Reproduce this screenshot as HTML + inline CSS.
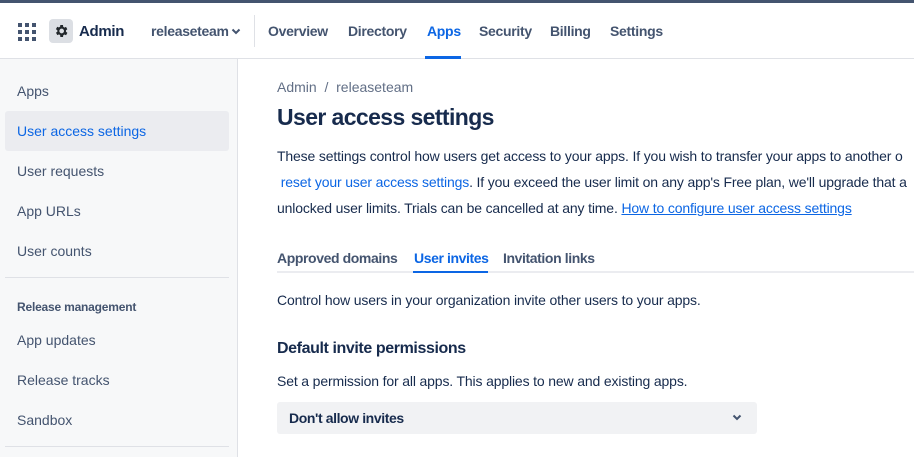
<!DOCTYPE html>
<html><head><style>
*{margin:0;padding:0;box-sizing:border-box}
body{width:914px;height:457px;overflow:hidden;font-family:"Liberation Sans",sans-serif;color:#172b4d;background:#fff;position:relative;font-size:14px}
.top{position:absolute;left:0;top:0;width:914px;height:3px;background:#44546f}
.hdr{position:absolute;top:3px;left:0;width:914px;height:56px;border-bottom:1px solid #dfe1e6}
.a{position:absolute;white-space:nowrap}
.nav{font-size:14px;font-weight:bold;color:#44546f;top:23px;letter-spacing:-0.3px}
.side{position:absolute;left:0;top:59px;width:238px;height:398px;background:#f7f8f9;border-right:1px solid #dfe1e6}
.si{position:absolute;left:17px;font-size:14px;color:#44546f}
p.t{position:absolute;left:277px;font-size:14px;color:#172b4d;white-space:nowrap;letter-spacing:-0.15px}
a{color:#0c66e4;text-decoration:none}
.b{font-weight:bold;letter-spacing:-0.4px}
</style></head><body>
<div class="top"></div>
<div class="hdr">
 <svg class="a" style="left:18px;top:20px" width="18" height="18" viewBox="0 0 18 18" fill="#44546f">
  <rect x="0" y="0" width="4" height="4"/><rect x="7" y="0" width="4" height="4"/><rect x="14" y="0" width="4" height="4"/>
  <rect x="0" y="7" width="4" height="4"/><rect x="7" y="7" width="4" height="4"/><rect x="14" y="7" width="4" height="4"/>
  <rect x="0" y="14" width="4" height="4"/><rect x="7" y="14" width="4" height="4"/><rect x="14" y="14" width="4" height="4"/>
 </svg>
 <div class="a" style="left:49px;top:16px;width:24px;height:24px;background:#dcdfe4;border-radius:4px"></div>
 <svg class="a" style="left:53px;top:20px" width="16" height="16" viewBox="0 0 24 24"><path fill="#22272b" d="M19.4 13a7.5 7.5 0 000-2l2.1-1.6-2-3.5-2.5 1a7.6 7.6 0 00-1.7-1L15 3h-4l-.4 2.7a7.6 7.6 0 00-1.7 1l-2.5-1-2 3.5L6.6 11a7.5 7.5 0 000 2l-2.1 1.6 2 3.5 2.5-1a7.6 7.6 0 001.7 1L11 21h4l.4-2.7a7.6 7.6 0 001.7-1l2.5 1 2-3.5zM13 15.5a3.5 3.5 0 110-7 3.5 3.5 0 010 7z"/></svg>
 <div class="a" style="left:79px;top:20px;font-size:15px;font-weight:bold;color:#172b4d;letter-spacing:-0.3px">Admin</div>
 <div class="a nav" style="left:151px;top:20px">releaseteam</div>
 <svg class="a" style="left:231px;top:25px" width="10" height="7" viewBox="0 0 10 7"><path d="M1.5 1.5L5 5l3.5-3.5" stroke="#44546f" stroke-width="2" fill="none"/></svg>
 <div class="a" style="left:254px;top:12px;width:1px;height:32px;background:#dfe1e6"></div>
 <div class="a nav" style="left:268px;top:20px">Overview</div>
 <div class="a nav" style="left:348px;top:20px">Directory</div>
 <div class="a nav" style="left:427px;top:20px;color:#0c66e4">Apps</div>
 <div class="a" style="left:425px;top:53px;width:36px;height:3px;background:#0c66e4"></div>
 <div class="a nav" style="left:479px;top:20px">Security</div>
 <div class="a nav" style="left:550px;top:20px">Billing</div>
 <div class="a nav" style="left:610px;top:20px">Settings</div>
</div>
<div class="side">
 <div class="si" style="top:24px">Apps</div>
 <div class="a" style="left:5px;top:52px;width:224px;height:40px;background:#ebecf0;border-radius:3px"></div>
 <div class="si" style="top:64px;color:#0c66e4">User access settings</div>
 <div class="si" style="top:104px">User requests</div>
 <div class="si" style="top:144px">App URLs</div>
 <div class="si" style="top:184px">User counts</div>
 <div class="a" style="left:5px;top:218px;width:224px;height:1px;background:#dfe1e6"></div>
 <div class="si" style="top:241px;font-size:12px;font-weight:bold;letter-spacing:-0.2px">Release management</div>
 <div class="si" style="top:273px">App updates</div>
 <div class="si" style="top:313px">Release tracks</div>
 <div class="si" style="top:353px">Sandbox</div>
 <div class="a" style="left:5px;top:387px;width:224px;height:1px;background:#dfe1e6"></div>
</div>
<div class="a" style="left:277px;top:79px;color:#626f86;font-size:14px">Admin &nbsp;/&nbsp; releaseteam</div>
<div class="a" style="left:277px;top:104px;font-size:23px;font-weight:bold;color:#172b4d;letter-spacing:-0.6px">User access settings</div>
<p class="t" style="top:148px">These settings control how users get access to your apps. If you wish to transfer your apps to another o</p>
<p class="t" style="top:174px">&nbsp;<a>reset your user access settings</a>. If you exceed the user limit on any app's Free plan, we'll upgrade that a</p>
<p class="t" style="top:200px">unlocked user limits. Trials can be cancelled at any time. <a style="text-decoration:underline">How to configure user access settings</a></p>
<div class="a" style="left:277px;top:271px;width:637px;height:2px;background:#ebecf0"></div>
<div class="a b" style="left:277px;top:250px;color:#44546f">Approved domains</div>
<div class="a b" style="left:414px;top:250px;color:#0c66e4">User invites</div>
<div class="a" style="left:413px;top:271px;width:75px;height:2px;background:#0c66e4"></div>
<div class="a b" style="left:503px;top:250px;color:#44546f">Invitation links</div>
<p class="t" style="top:292px">Control how users in your organization invite other users to your apps.</p>
<div class="a" style="left:277px;top:340px;font-size:16px;font-weight:bold;letter-spacing:-0.4px">Default invite permissions</div>
<p class="t" style="top:373px">Set a permission for all apps. This applies to new and existing apps.</p>
<div class="a" style="left:277px;top:402px;width:480px;height:32px;background:#f1f2f4;border-radius:3px"></div>
<div class="a b" style="left:289px;top:410px;color:#172b4d">Don't allow invites</div>
<svg class="a" style="left:732px;top:414px" width="10" height="7" viewBox="0 0 10 7"><path d="M1.5 1.5L5 5l3.5-3.5" stroke="#44546f" stroke-width="2" fill="none"/></svg>
</body></html>
